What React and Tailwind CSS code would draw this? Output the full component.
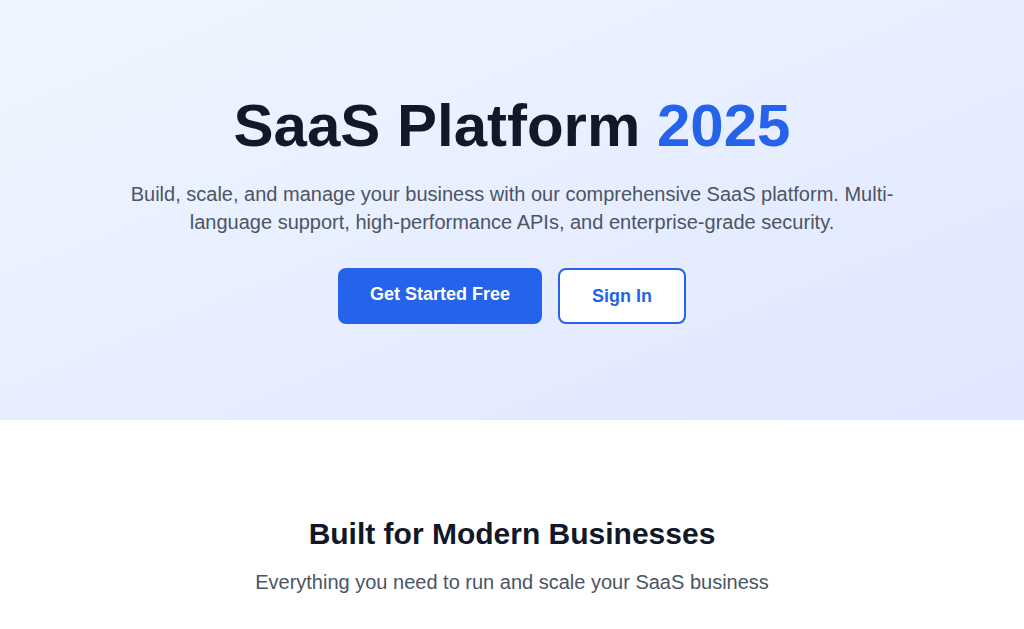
import React from "react";

const App = () => {
  return (
    <div className="min-h-screen bg-white font-['Liberation_Sans',Arial,sans-serif]">
      {/* Hero */}
      <section className="bg-gradient-to-br from-[#eff6ff] to-[#e0e7ff] py-24 px-4">
        <div className="max-w-4xl mx-auto text-center">
          <h1 className="text-6xl font-bold text-[#111827] mb-6">
            SaaS Platform <span className="text-[#2563eb]">2025</span>
          </h1>
          <p className="text-xl text-[#4b5563] mb-8 max-w-3xl mx-auto">
            Build, scale, and manage your business with our comprehensive SaaS
            platform. Multi-language support, high-performance APIs, and
            enterprise-grade security.
          </p>
          <div className="flex justify-center gap-4">
            <a
              href="#"
              className="block bg-[#2563eb] text-white px-8 py-3 rounded-lg text-lg font-semibold"
            >
              Get Started Free
            </a>
            <button className="bg-white border-2 border-[#2563eb] text-[#2563eb] px-8 py-3 rounded-lg text-lg font-semibold">
              Sign In
            </button>
          </div>
        </div>
      </section>

      {/* Features */}
      <section className="py-24 px-4">
        <div className="max-w-6xl mx-auto text-center">
          <h2 className="text-3xl font-bold text-[#111827] mb-4">
            Built for Modern Businesses
          </h2>
          <p className="text-xl text-[#4b5563]">
            Everything you need to run and scale your SaaS business
          </p>
        </div>
      </section>
    </div>
  );
};

export default App;
